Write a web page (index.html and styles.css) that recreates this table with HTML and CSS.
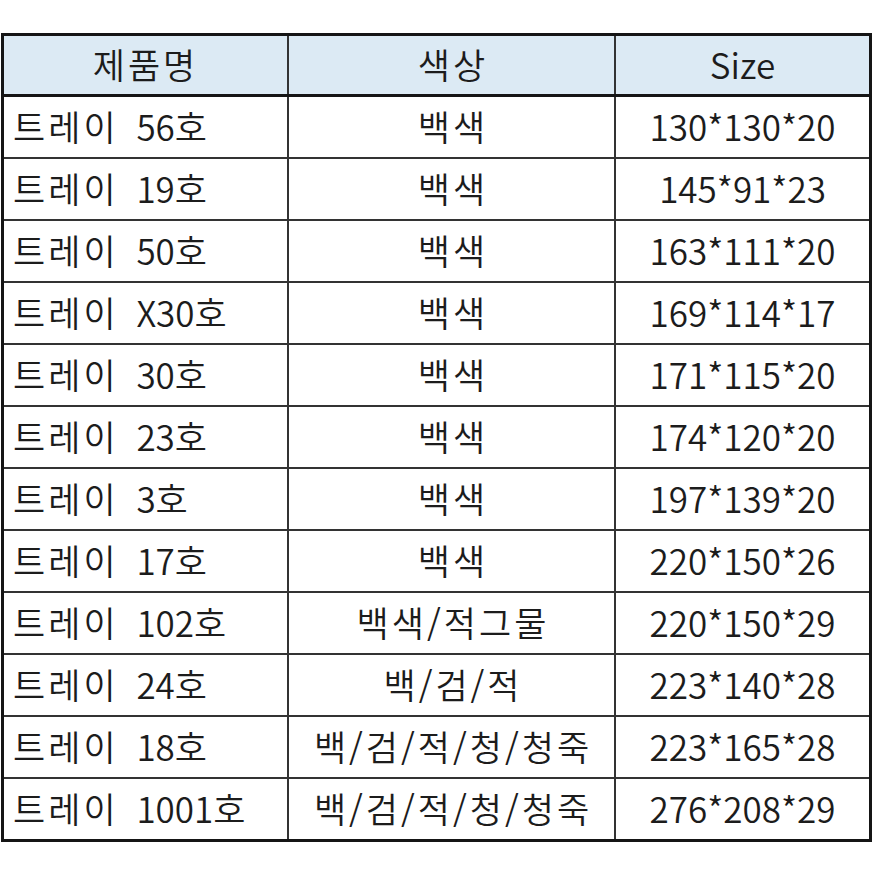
FILE: index.html
```html
<!DOCTYPE html>
<html lang="ko">
<head>
<meta charset="utf-8">
<link rel="stylesheet" href="styles.css">
</head>
<body>
<div class="sheet">
  <div class="row head">
    <div class="cell c1 ko">제품명</div>
    <div class="cell c2 ko">색상</div>
    <div class="cell c3">Size</div>
  </div>
  <div class="row"><div class="cell c1 left"><span class="ko">트레이</span> 56호</div><div class="cell c2 ko">백색</div><div class="cell c3">130*130*20</div></div>
  <div class="row"><div class="cell c1 left"><span class="ko">트레이</span> 19호</div><div class="cell c2 ko">백색</div><div class="cell c3">145*91*23</div></div>
  <div class="row"><div class="cell c1 left"><span class="ko">트레이</span> 50호</div><div class="cell c2 ko">백색</div><div class="cell c3">163*111*20</div></div>
  <div class="row"><div class="cell c1 left"><span class="ko">트레이</span> X30호</div><div class="cell c2 ko">백색</div><div class="cell c3">169*114*17</div></div>
  <div class="row"><div class="cell c1 left"><span class="ko">트레이</span> 30호</div><div class="cell c2 ko">백색</div><div class="cell c3">171*115*20</div></div>
  <div class="row"><div class="cell c1 left"><span class="ko">트레이</span> 23호</div><div class="cell c2 ko">백색</div><div class="cell c3">174*120*20</div></div>
  <div class="row"><div class="cell c1 left"><span class="ko">트레이</span> 3호</div><div class="cell c2 ko">백색</div><div class="cell c3">197*139*20</div></div>
  <div class="row"><div class="cell c1 left"><span class="ko">트레이</span> 17호</div><div class="cell c2 ko">백색</div><div class="cell c3">220*150*26</div></div>
  <div class="row"><div class="cell c1 left"><span class="ko">트레이</span> 102호</div><div class="cell c2 ko">백색/적그물</div><div class="cell c3">220*150*29</div></div>
  <div class="row"><div class="cell c1 left"><span class="ko">트레이</span> 24호</div><div class="cell c2 ko">백/검/적</div><div class="cell c3">223*140*28</div></div>
  <div class="row"><div class="cell c1 left"><span class="ko">트레이</span> 18호</div><div class="cell c2 ko">백/검/적/청/청죽</div><div class="cell c3">223*165*28</div></div>
  <div class="row last"><div class="cell c1 left"><span class="ko">트레이</span> 1001호</div><div class="cell c2 ko">백/검/적/청/청죽</div><div class="cell c3">276*208*29</div></div>
</div>
</body>
</html>
```
FILE: styles.css
```css
html, body {
  margin: 0;
  padding: 0;
  background: #ffffff;
}
body {
  padding-top: 33px;
  padding-left: 1px;
  font-family: "Noto Sans CJK KR", "Noto Sans", sans-serif;
  font-size: 35px;
  font-weight: 350;
  color: #1c1c1c;
}
.sheet {
  width: 865px;
  border: 3px solid #151515;
  display: flex;
  flex-direction: column;
}
.row {
  display: flex;
  height: 60px;
  border-bottom: 2px solid #333333;
}
.row.head {
  height: 58px;
  background: #dceaf4;
  border-bottom: 3px solid #151515;
}
.row.last {
  border-bottom: none;
}
.cell {
  display: flex;
  align-items: center;
  justify-content: center;
  line-height: 1;
  padding-bottom: 3px;
  box-sizing: border-box;
  white-space: pre;
}
.c1 {
  width: 285px;
  border-right: 2px solid #333333;
}
.c2 {
  width: 327px;
  border-right: 2px solid #333333;
}
.c3 {
  width: 253px;
}
.left {
  justify-content: flex-start;
  padding-left: 9px;
  word-spacing: 8px;
}
.ko {
  letter-spacing: 3px;
}
.c2.ko {
  padding-left: 3px;
}
```
